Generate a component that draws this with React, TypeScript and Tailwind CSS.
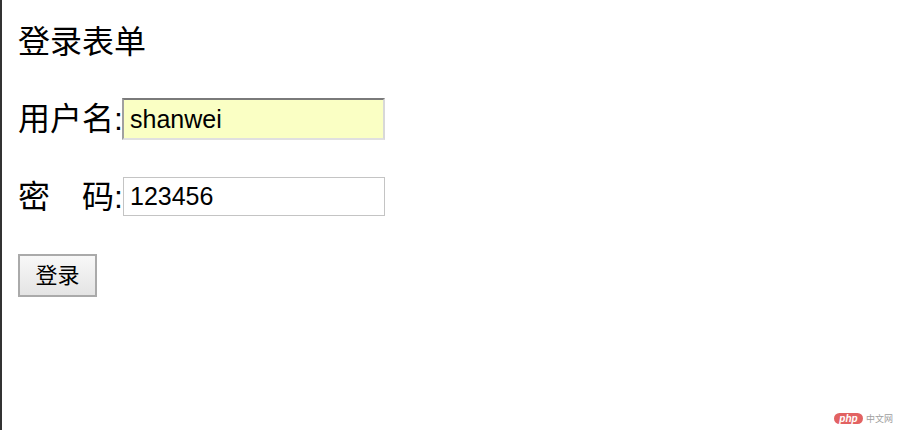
import React from "react";

const cjk = "font-['Liberation_Sans','Noto_Sans_CJK_SC',sans-serif]";

function Field({
  label,
  value,
  filled,
}: {
  label: string;
  value: string;
  filled?: boolean;
}) {
  return (
    <div className="flex items-center">
      <span className={`w-[104px] shrink-0 whitespace-nowrap text-[32px] leading-none text-black ${cjk}`}>
        {label}
      </span>
      {filled ? (
        <input
          defaultValue={value}
          className="h-[42px] w-[263px] border-2 border-t-[#7a7a7a] border-l-[#a0a0a0] border-r-[#d8d8d8] border-b-[#e0e0e0] bg-[#faffc4] px-[6px] font-['Liberation_Sans',sans-serif] text-[25px] text-black outline-none"
        />
      ) : (
        <input
          defaultValue={value}
          className="ml-px h-[39px] w-[262px] border border-[#c4c4c4] bg-white px-[6px] font-['Liberation_Sans',sans-serif] text-[25px] text-black outline-none"
        />
      )}
    </div>
  );
}

export default function App() {
  return (
    <div className="relative h-[430px] w-[898px] overflow-hidden border-l-2 border-[#333333] bg-white">
      <div className="flex flex-col items-start pl-[16px] pt-[26px]">
        <h1 className={`text-[32px] font-normal leading-none text-black ${cjk}`}>
          登录表单
        </h1>
        <form className="mt-[40px] flex flex-col items-start" onSubmit={(e) => e.preventDefault()}>
          <Field label="用户名:" value="shanwei" filled />
          <div className="mt-[37px]">
            <Field label="密　码:" value="123456" />
          </div>
          <button
            type="submit"
            className={`mt-[38px] h-[43px] w-[79px] border-2 border-[#aaaaaa] bg-gradient-to-b from-[#f8f8f8] to-[#e4e4e4] text-[22px] leading-none text-black ${cjk}`}
          >
            登录
          </button>
        </form>
      </div>

      <div className="absolute bottom-[6px] right-[5px] flex items-center gap-[3px]">
        <span className="flex h-[11px] w-[29px] items-center justify-center rounded-full bg-[#e26262] font-['Liberation_Sans',sans-serif] text-[10px] font-bold italic leading-none text-white">
          php
        </span>
        <span className="font-['Noto_Sans_CJK_SC',sans-serif] text-[9px] leading-none text-[#a0a0a0]">
          中文网
        </span>
      </div>
    </div>
  );
}
